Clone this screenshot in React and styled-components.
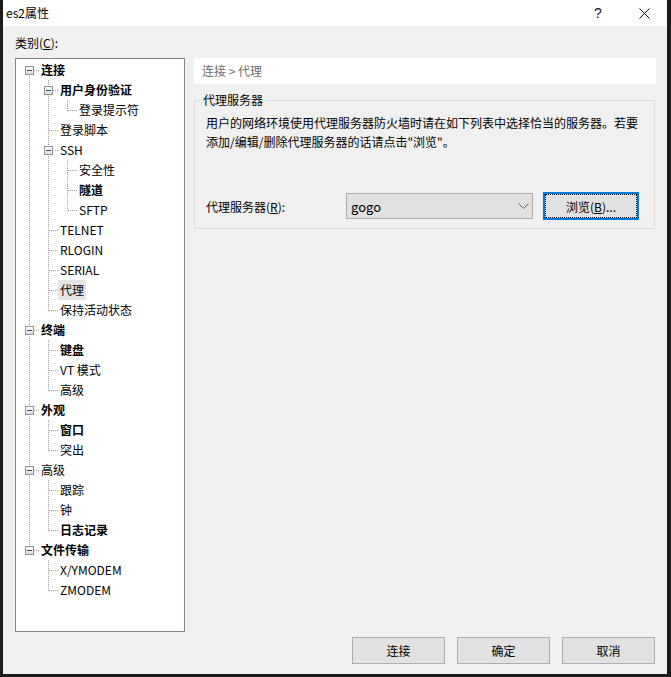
import React from 'react';
import styled, { createGlobalStyle } from 'styled-components';

const GlobalStyle = createGlobalStyle`
  html, body { margin: 0; padding: 0; background: #1c1c1c; }
  body {
    font-family: "Noto Sans CJK SC", "Noto Sans", "Liberation Sans", sans-serif;
    font-size: 12px;
    color: #000;
  }
  * { box-sizing: border-box; }
`;

const Screen = styled.div`
  width: 671px;
  height: 677px;
  background: #1c1c1c;
  padding: 0 4px 3px 3px;
  display: flex;
`;

const Window = styled.div`
  flex: 1;
  display: flex;
  flex-direction: column;
  background: #f0f0f0;
`;

const TitleBar = styled.div`
  height: 26px;
  flex: none;
  background: #fff;
  display: flex;
  align-items: center;
  padding-left: 3px;
`;

const Title = styled.div`
  flex: 1;
  font-size: 12px;
  line-height: 26px;
`;

const CaptionButton = styled.div`
  width: 46px;
  height: 26px;
  display: flex;
  align-items: center;
  justify-content: center;
  font-family: "Liberation Sans", sans-serif;
  font-size: 14px;
  color: #111;
`;

const Body = styled.div`
  flex: 1;
  display: flex;
  flex-direction: column;
  padding: 9px 11px 10px 12px;
`;

const CategoryLabel = styled.div`
  line-height: 16px;
  margin-bottom: 7px;
`;

const Main = styled.div`
  display: grid;
  grid-template-columns: 170px 1fr;
  column-gap: 9px;
  height: 574px;
`;

const TreeBox = styled.div`
  border: 1px solid #828790;
  background: #fff;
  padding: 1px 0 0 4px;
  overflow: hidden;
`;

const Row = styled.div`
  display: flex;
  height: 20px;
`;

const DOT_V = 'repeating-linear-gradient(to bottom, #a0a0a0 0 1px, transparent 1px 2px)';
const DOT_H = 'repeating-linear-gradient(to right, #a0a0a0 0 1px, transparent 1px 2px)';

function lineBackground({ $top, $bottom, $branch }) {
  const layers = [];
  if ($top && $bottom) layers.push([DOT_V, '9px 0', '1px 20px']);
  else if ($top) layers.push([DOT_V, '9px 0', '1px 11px']);
  else if ($bottom) layers.push([DOT_V, '9px 10px', '1px 10px']);
  if ($branch) layers.push([DOT_H, '10px 10px', '9px 1px']);
  if (!layers.length) return 'background: none;';
  return `
    background-image: ${layers.map((l) => l[0]).join(', ')};
    background-position: ${layers.map((l) => l[1]).join(', ')};
    background-size: ${layers.map((l) => l[2]).join(', ')};
    background-repeat: no-repeat;
  `;
}

const Cell = styled.div`
  width: 19px;
  height: 20px;
  flex: none;
  display: flex;
  align-items: flex-start;
  ${(p) => lineBackground(p)}
`;

const Expander = styled.div`
  width: 9px;
  height: 9px;
  margin: 6px 0 0 5px;
  border: 1px solid #919191;
  background:
    linear-gradient(#24508c, #24508c) center / 5px 1px no-repeat,
    linear-gradient(to bottom, #ffffff, #dcdcdc);
`;

const Label = styled.div`
  line-height: 20px;
  padding: 0 2px;
  white-space: nowrap;
  font-weight: ${(p) => (p.$bold ? 700 : 400)};
  background: ${(p) => (p.$selected ? '#e5e5e5' : 'transparent')};
`;

const RightPanel = styled.div`
  display: flex;
  flex-direction: column;
`;

const Breadcrumb = styled.div`
  height: 26px;
  background: #fff;
  line-height: 26px;
  padding-left: 8px;
  color: #6d6d6d;
`;

const GroupBox = styled.fieldset`
  margin: 8px 1px 0 0;
  padding: 0;
  border: 1px solid #dcdcdc;
  min-width: 0;
`;

const GroupCaption = styled.legend`
  margin-left: 6px;
  padding: 0 2px;
  line-height: 16px;
`;

const GroupContent = styled.div`
  padding: 5px 0 8px 11px;
`;

const Description = styled.p`
  margin: 0;
  line-height: 19px;
`;

const ProxyRow = styled.div`
  display: flex;
  align-items: center;
  height: 28px;
  margin-top: 41px;
`;

const FieldLabel = styled.div`
  width: 140px;
  flex: none;
`;

const Combo = styled.div`
  width: 187px;
  height: 26px;
  flex: none;
  display: flex;
  align-items: center;
  justify-content: space-between;
  padding: 0 3px 0 4px;
  border: 1px solid #adadad;
  background: #e1e1e1;
  font-size: 13px;
`;

const Button = styled.div`
  width: ${(p) => p.$w || 93}px;
  height: ${(p) => p.$h || 27}px;
  flex: none;
  display: flex;
  align-items: center;
  justify-content: center;
  background: #e1e1e1;
  border: ${(p) => (p.$focused ? '2px solid #0078d7' : '1px solid #adadad')};
  outline: ${(p) => (p.$focused ? '1px dotted #000' : 'none')};
  outline-offset: -3px;
`;

const BrowseButton = styled(Button)`
  margin-left: 10px;
`;

const Footer = styled.div`
  display: flex;
  justify-content: flex-end;
  gap: 12px;
  margin-top: 5px;
  padding-right: 1px;
`;

const tree = [
  {
    label: '连接', bold: true, children: [
      { label: '用户身份验证', bold: true, children: [{ label: '登录提示符' }] },
      { label: '登录脚本' },
      { label: 'SSH', children: [{ label: '安全性' }, { label: '隧道', bold: true }, { label: 'SFTP' }] },
      { label: 'TELNET' },
      { label: 'RLOGIN' },
      { label: 'SERIAL' },
      { label: '代理', selected: true },
      { label: '保持活动状态' },
    ],
  },
  { label: '终端', bold: true, children: [{ label: '键盘', bold: true }, { label: 'VT 模式' }, { label: '高级' }] },
  { label: '外观', bold: true, children: [{ label: '窗口', bold: true }, { label: '突出' }] },
  { label: '高级', children: [{ label: '跟踪' }, { label: '钟' }, { label: '日志记录', bold: true }] },
  { label: '文件传输', bold: true, children: [{ label: 'X/YMODEM' }, { label: 'ZMODEM' }] },
];

function flatten(nodes, level = 0, guides = [], out = []) {
  nodes.forEach((n, i) => {
    const hasNext = i < nodes.length - 1;
    const isFirstRoot = level === 0 && i === 0;
    out.push({ ...n, level, guides, hasNext, isFirstRoot });
    if (n.children) flatten(n.children, level + 1, [...guides, hasNext], out);
  });
  return out;
}

const rows = flatten(tree);

const Chevron = () => (
  <svg width="11" height="6" viewBox="0 0 11 6">
    <polyline points="0.5,0.5 5.5,5.5 10.5,0.5" fill="none" stroke="#606060" strokeWidth="1" />
  </svg>
);

const CloseIcon = () => (
  <svg width="11" height="11" viewBox="0 0 11 11">
    <path d="M0.5 0.5 L10.5 10.5 M10.5 0.5 L0.5 10.5" stroke="#111" strokeWidth="1" />
  </svg>
);

export default function App() {
  return (
    <>
      <GlobalStyle />
      <Screen>
        <Window>
          <TitleBar>
            <Title>es2属性</Title>
            <CaptionButton>?</CaptionButton>
            <CaptionButton><CloseIcon /></CaptionButton>
          </TitleBar>
          <Body>
            <CategoryLabel>类别(<u>C</u>):</CategoryLabel>
            <Main>
              <TreeBox>
                {rows.map((r, idx) => (
                  <Row key={idx}>
                    {r.guides.map((g, j) => (
                      <Cell key={j} $top={g} $bottom={g} />
                    ))}
                    <Cell $top={!r.isFirstRoot} $bottom={r.hasNext} $branch>
                      {r.children && <Expander />}
                    </Cell>
                    <Label $bold={r.bold} $selected={r.selected}>{r.label}</Label>
                  </Row>
                ))}
              </TreeBox>
              <RightPanel>
                <Breadcrumb>连接 &gt; 代理</Breadcrumb>
                <GroupBox>
                  <GroupCaption>代理服务器</GroupCaption>
                  <GroupContent>
                    <Description>
                      用户的网络环境使用代理服务器防火墙时请在如下列表中选择恰当的服务器。若要
                      <br />
                      添加/编辑/删除代理服务器的话请点击"浏览"。
                    </Description>
                    <ProxyRow>
                      <FieldLabel>代理服务器(<u>R</u>):</FieldLabel>
                      <Combo>
                        <span>gogo</span>
                        <Chevron />
                      </Combo>
                      <BrowseButton $w={96} $h={28} $focused>浏览(<u>B</u>)...</BrowseButton>
                    </ProxyRow>
                  </GroupContent>
                </GroupBox>
              </RightPanel>
            </Main>
            <Footer>
              <Button>连接</Button>
              <Button>确定</Button>
              <Button>取消</Button>
            </Footer>
          </Body>
        </Window>
      </Screen>
    </>
  );
}
